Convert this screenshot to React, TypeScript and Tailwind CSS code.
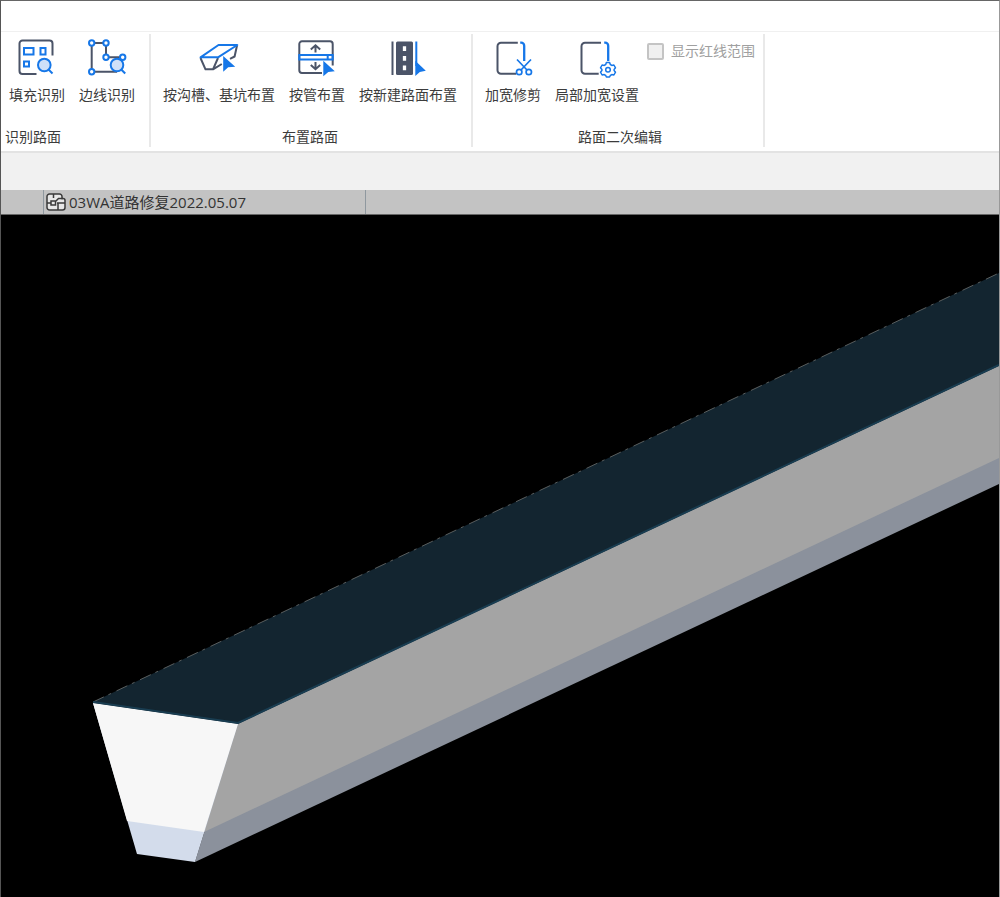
import React from "react";

interface ToolButtonProps {
  label: string;
  children: React.ReactNode;
}

interface RibbonGroupProps {
  title: string;
  className?: string;
  titleClassName?: string;
  children: React.ReactNode;
}

const DARK = "#4b5468";
const BLUE = "#1677e8";
const PALE = "#cfe0f8";

function ToolButton({ label, children }: ToolButtonProps) {
  return (
    <button
      type="button"
      className="flex shrink-0 flex-col items-center gap-2 rounded-sm hover:bg-gray-100 cursor-pointer"
    >
      <svg width="40" height="40" viewBox="0 0 40 40" fill="none" stroke={DARK} strokeWidth="2" aria-hidden="true">
        {children}
      </svg>
      <span className="whitespace-nowrap">{label}</span>
    </button>
  );
}

function RibbonGroup({ title, className = "pr-3.5 pl-3", titleClassName = "text-center", children }: RibbonGroupProps) {
  return (
    <section className={`flex shrink-0 flex-col gap-6 border-r-2 border-[#e9e9e9] pt-1 pb-px ${className}`}>
      <div className="flex items-start gap-3.5">{children}</div>
      <h2 className={`whitespace-nowrap ${titleClassName}`}>{title}</h2>
    </section>
  );
}

function FillDetectIcon() {
  return (
    <>
      <path d="M19.5 36H5.5a3 3 0 0 1-3-3V5.500a3 3 0 0 1 3-3H32.500a3 3 0 0 1 3 3V17.500" />
      <g stroke={BLUE}>
        <rect x="7" y="10" width="9.500" height="6.500" />
        <rect x="23.500" y="10" width="5" height="6.500" />
        <rect x="7" y="23.500" width="5" height="5" />
        <circle cx="27.300" cy="27" r="6.300" fill={PALE} />
        <path d="m31.500 31.500 4 4" />
      </g>
    </>
  );
}

function EdgeDetectIcon() {
  return (
    <>
      <path d="M4.700 5H19v14.300h16.500M4.700 5v28.700H30" />
      <g stroke={BLUE}>
        <circle cx="30" cy="27" r="6.300" fill={PALE} />
        <path d="m34.200 31.500 4 4" />
        <g fill="#fff">
          <circle cx="4.700" cy="5" r="2.700" />
          <circle cx="19" cy="5" r="2.700" />
          <circle cx="19" cy="19.300" r="2.700" />
          <circle cx="35.700" cy="19.300" r="2.700" />
          <circle cx="4.700" cy="33.700" r="2.700" />
        </g>
      </g>
    </>
  );
}

function TrenchIcon() {
  return (
    <>
      <path d="M1.500 20l5 11.300h7.500l5-11.300M14 31.300l8.800-5.300M38 7.500l-2.400 11-4.600 2.300" strokeLinejoin="round" />
      <path d="M1.500 19.300H19L38.300 7H19.500z" stroke={BLUE} strokeLinejoin="round" />
      <path d="M24.200 18v15.700l5-4.400 7-.6z" fill={BLUE} stroke="none" />
    </>
  );
}

function PipeIcon() {
  return (
    <>
      <path d="M25 35H5a2.700 2.700 0 0 1-2.700-2.700V6A2.700 2.700 0 0 1 5 3.300h28A2.700 2.700 0 0 1 35.700 6v21.500" />
      <path d="M18.500 14.500V7.500M13.800 11.500l4.700-4.200 4.700 4.200M18.500 24v7M13.800 27l4.700 4.200 4.700-4.200" />
      <path d="M2.300 17h33.400v4.500H2.300zM30.700 17v4.500" stroke={BLUE} />
      <path d="M26.300 22.700v15.600l5-4.300 6.500-.7z" fill={BLUE} stroke="none" />
    </>
  );
}

function NewRoadIcon() {
  return (
    <>
      <path d="M4.500 3.500V37" />
      <rect x="8" y="3.500" width="17" height="33.500" rx="1.500" fill={DARK} stroke="none" />
      <path d="M16.500 8.300V13M16.500 18v4.700M16.500 27.500v4.700" stroke="#fff" strokeWidth="3.300" />
      <path d="M28.300 3.500V28" stroke={BLUE} />
      <path d="M27.300 22.700v15.300l4.500-4 6-1.300z" fill={BLUE} stroke="none" />
    </>
  );
}

function TrimIcon() {
  return (
    <>
      <path d="M24.800 4.700H8A3.500 3.500 0 0 0 4.500 8.200v24A3.500 3.500 0 0 0 8 35.700h15" />
      <path d="M27.200 4.700h1a3 3 0 0 1 3 3V23" stroke={BLUE} strokeWidth="2.300" />
      <g stroke={BLUE} strokeWidth="1.700">
        <path d="M24 21.500 34 32M38 21.500 28 32" />
        <circle cx="26.200" cy="34" r="2.700" />
        <circle cx="35.800" cy="34" r="2.700" />
      </g>
    </>
  );
}

function WidenSettingsIcon() {
  return (
    <>
      <path d="M24 4.700H8A3.500 3.500 0 0 0 4.500 8.200v24A3.500 3.500 0 0 0 8 35.700h13.700" />
      <path d="M27.200 4.700h1a3 3 0 0 1 3 3V23" stroke={BLUE} strokeWidth="2.300" />
      <g stroke={BLUE} strokeWidth="1.500" strokeLinejoin="round">
        <path
          d="M29.400 24.500h3.200l.7 2 1.500.9 2.100-.4 1.600 2.800-1.400 1.600 0 1.200 1.400 1.600-1.600 2.800-2.100-.4-1.500.9-.7 1.500h-3.200l-.7-1.500-1.500-.9-2.100.4-1.600-2.800 1.400-1.600v-1.200l-1.400-1.600 1.600-2.800 2.100.4 1.500-.9z"
          fill="#fff"
        />
        <circle cx="31" cy="31.700" r="2.300" />
      </g>
    </>
  );
}

function DrawingIcon() {
  return (
    <svg className="shrink-0" width="20" height="18" viewBox="0 0 20 18" fill="none" stroke="#3a3a3a" strokeWidth="1.5" aria-hidden="true">
      <path
        d="M16 5.500V3.500A2.500 2.500 0 0 0 13.500 1h-10A2.500 2.500 0 0 0 1 3.500v11A2.500 2.500 0 0 0 3.500 17h13a2.500 2.500 0 0 0 2.500-2.500V7.500a2 2 0 0 0-2-2z"
        fill="#e8e8e8"
      />
      <path d="M7.500 1v4M1 10h4M5 8h4.500v4H5zM9.500 8.500l3-3H17M11 10h8M12 10v7" />
    </svg>
  );
}

// Trapezoid trench solid, extended off the right edge of the view.
// Lower layers are painted full height, upper layers sit on top of them.
function ModelView() {
  return (
    <svg
      className="block min-h-0 w-full flex-1 bg-black"
      viewBox="0 0 998 682"
      preserveAspectRatio="xMinYMin slice"
      role="img"
    >
      <polygon points="92,487 998,58 998,151 237,509" fill="#132530" />
      <path d="M92 487 998 58" stroke="#8d8f8c" strokeWidth="1" strokeDasharray="12 5 3 6" opacity="0.6" />
      <polygon points="237,509 998,151 998,269 194,647" fill="#8b919c" />
      <polygon points="237,509 998,151 998,243 203,617" fill="#a4a4a4" />
      <polygon points="92,488 237,509 194,647 136,639" fill="#d3dceb" />
      <polygon points="92,488 237,509 203,617 126,606" fill="#f7f7f7" />
      <path d="M92 487 237 508 998 150" fill="none" stroke="#193d51" strokeWidth="2" />
    </svg>
  );
}

export default function App() {
  return (
    <div className="flex h-screen flex-col overflow-hidden border-t border-r border-l border-t-[#666] border-r-[#999] border-l-[#555] bg-white font-['Open_Sans','Noto_Sans_CJK_SC',sans-serif] text-[14px] leading-[18px] text-[#3c3c3c]">
      <header className="h-[31px] shrink-0 border-b border-[#f0f0f0]" />

      {/* Ribbon */}
      <div className="flex shrink-0 border-b-2 border-[#e3e3e3] pt-0.5 pb-1">
        <RibbonGroup title="识别路面" className="pr-3.5 pl-1" titleClassName="text-left">
          <div className="flex gap-3.5 pl-1">
            <ToolButton label="填充识别"><FillDetectIcon /></ToolButton>
            <ToolButton label="边线识别"><EdgeDetectIcon /></ToolButton>
          </div>
        </RibbonGroup>

        <RibbonGroup title="布置路面">
          <ToolButton label="按沟槽、基坑布置"><TrenchIcon /></ToolButton>
          <ToolButton label="按管布置"><PipeIcon /></ToolButton>
          <ToolButton label="按新建路面布置"><NewRoadIcon /></ToolButton>
        </RibbonGroup>

        <RibbonGroup title="路面二次编辑" className="pr-2 pl-3">
          <div className="flex items-start gap-2">
            <div className="flex gap-3.5">
              <ToolButton label="加宽修剪"><TrimIcon /></ToolButton>
              <ToolButton label="局部加宽设置"><WidenSettingsIcon /></ToolButton>
            </div>
            <label className="flex items-center gap-[7px] pt-1 whitespace-nowrap text-[#a0a0a0]">
              <input
                type="checkbox"
                disabled
                className="h-[17px] w-[17px] appearance-none rounded-xs border-2 border-[#c4c4c4] bg-[#f0f0f0]"
              />
              显示红线范围
            </label>
          </div>
        </RibbonGroup>
      </div>

      <div className="h-[37px] shrink-0 bg-[#f1f1f1]" />

      {/* Document tabs */}
      <nav className="flex h-[25px] shrink-0 border-b border-[#666] bg-[#c3c3c3] pl-[42px]">
        <button
          type="button"
          className="flex w-[323px] items-center gap-[3px] border-r border-l border-[#8f989f] pl-[2px] text-[15px] text-[#333]"
        >
          <DrawingIcon />
          <span>03WA道路修复2022.05.07</span>
        </button>
      </nav>

      <ModelView />
    </div>
  );
}
